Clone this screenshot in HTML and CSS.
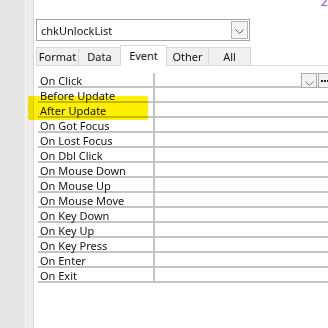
FILE: index.html
```html
<!DOCTYPE html>
<html lang="en">
  <head>
    <meta charset="UTF-8" />
    <title>Property Sheet</title>
    <link rel="stylesheet" href="styles.css">
  </head>
  <body>
    <div class="window">
      <!-- left strip of the design surface -->
      <div class="rail"></div>
      <div class="gutter"></div>

      <div class="sheet">
        <div class="combo">
          <span class="combo-text">chkUnlockList</span>
          <span class="combo-btn">
            <svg width="9" height="5" viewBox="0 0 9 5"><polyline points="0.5,0.5 4.5,4.5 8.5,0.5" fill="none" stroke="#555" stroke-width="1"/></svg>
          </span>
        </div>

        <div class="tabs">
          <div class="tab">Format</div>
          <div class="tab">Data</div>
          <div class="tab tab-active">Event</div>
          <div class="tab">Other</div>
          <div class="tab">All</div>
        </div>

        <div class="props">
          <div class="row">
            <div class="name">On Click</div>
            <div class="value">
              <span class="drop">
                <svg width="9" height="5" viewBox="0 0 9 5"><polyline points="0.5,0.5 4.5,4.5 8.5,0.5" fill="none" stroke="#777" stroke-width="1"/></svg>
              </span>
              <span class="build">
                <svg width="12" height="4" viewBox="0 0 12 4"><rect x="2" y="1" width="2" height="2" fill="#222"/><rect x="5" y="1" width="2" height="2" fill="#222"/><rect x="8" y="1" width="2" height="2" fill="#222"/></svg>
              </span>
            </div>
          </div>
          <div class="row"><div class="name">Before Update</div><div class="value"></div></div>
          <div class="row">
            <div class="name">After Update</div><div class="value"></div>
            <span class="marker"></span>
          </div>
          <div class="row"><div class="name">On Got Focus</div><div class="value"></div></div>
          <div class="row"><div class="name">On Lost Focus</div><div class="value"></div></div>
          <div class="row"><div class="name">On Dbl Click</div><div class="value"></div></div>
          <div class="row"><div class="name">On Mouse Down</div><div class="value"></div></div>
          <div class="row"><div class="name">On Mouse Up</div><div class="value"></div></div>
          <div class="row"><div class="name">On Mouse Move</div><div class="value"></div></div>
          <div class="row"><div class="name">On Key Down</div><div class="value"></div></div>
          <div class="row"><div class="name">On Key Up</div><div class="value"></div></div>
          <div class="row"><div class="name">On Key Press</div><div class="value"></div></div>
          <div class="row"><div class="name">On Enter</div><div class="value"></div></div>
          <div class="row"><div class="name">On Exit</div><div class="value"></div></div>
        </div>
      </div>

      <svg class="corner-mark" width="8" height="8" viewBox="0 0 8 8">
        <polyline points="6.5,0 2,5.5 7.5,5.5" fill="none" stroke="#9068c8" stroke-width="1.2"/>
      </svg>
    </div>
  </body>
</html>
```

FILE: styles.css
```css
*,
*:before,
*:after {
  box-sizing: border-box;
}
body {
  margin: 0;
  background: #fff;
  color: #141414;
  font: 11px/1 "Noto Sans", "Open Sans", sans-serif;
  overflow: hidden;
}
.window {
  position: relative;
  display: flex;
  width: 328px;
  height: 328px;
  overflow: hidden;
}
.rail {
  flex: none;
  width: 26px;
  background: #e6e6e6;
  border-right: 1px solid #f8f8f8;
}
.gutter {
  flex: none;
  width: 8px;
  background: #ececec;
  border-right: 1px solid #d8d8d8;
}
.sheet {
  flex: 1;
  min-width: 0;
  padding: 19px 0 0 2px;
}

/* object name combo */
.combo {
  width: 214px;
  height: 22px;
  border: 1px solid #a6a6a6;
  display: flex;
  align-items: center;
  justify-content: space-between;
  padding: 0 1px 0 4px;
}
.combo-text {
  font-size: 11px;
  padding-top: 1px;
}
.combo-btn {
  width: 17px;
  height: 18px;
  border: 1px solid #b4b4b4;
  background: #f4f4f4;
  display: flex;
  align-items: center;
  justify-content: center;
  padding-top: 2px;
}

/* tabs */
.tabs {
  margin-top: 7px;
  height: 18px;
  display: flex;
  align-items: flex-end;
  border-bottom: 1px solid #dcdcdc;
}
.tab {
  width: 43px;
  height: 18px;
  margin-right: -1px;
  background: #f0f0f0;
  border: 1px solid #d9d9d9;
  border-bottom: none;
  text-align: center;
  line-height: 17px;
}
.tab-active {
  position: relative;
  z-index: 1;
  width: 47px;
  height: 21px;
  margin-bottom: -1px;
  background: #fff;
  line-height: 19px;
}

/* property grid */
.props {
  margin: 7px 0 0 2px;
}
.row {
  position: relative;
  display: flex;
  height: 15px;
  border-bottom: 2px solid #c4c4c4;
}
.name {
  flex: none;
  width: 117px;
  padding: 1px 0 0 2px;
  border-right: 2px solid #c4c4c4;
  line-height: 13px;
  white-space: nowrap;
}
.value {
  flex: none;
  width: 190px;
  display: flex;
  padding-left: 146px;
}
.drop,
.build {
  flex: none;
  height: 15px;
  border: 1px solid #acacac;
  background: #f2f2f2;
  display: flex;
  align-items: center;
  justify-content: center;
}
.drop {
  width: 16px;
  padding-top: 5px;
}
.build {
  width: 16px;
  margin-left: 1px;
  justify-content: flex-start;
}

/* yellow highlighter stroke */
.marker {
  position: absolute;
  left: -10px;
  top: -7px;
  width: 120px;
  height: 24px;
  background: #fff000;
  border-radius: 2px;
  mix-blend-mode: multiply;
}

.corner-mark {
  position: absolute;
  top: 0;
  left: 320px;
}
```
